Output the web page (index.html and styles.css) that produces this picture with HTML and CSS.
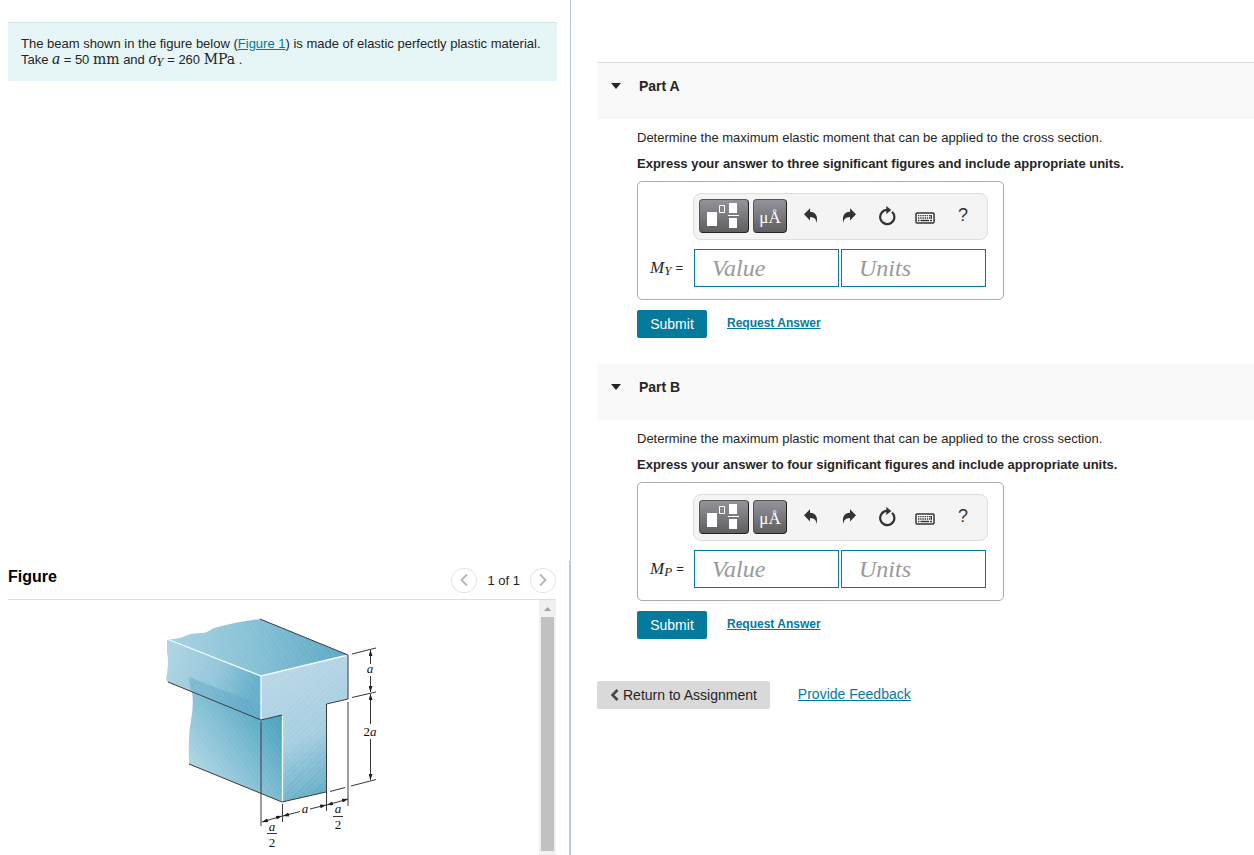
FILE: index.html
```
<!DOCTYPE html>
<html lang="en">
<head>
<meta charset="utf-8">
<title>Elastic and plastic moment</title>
<link rel="stylesheet" href="styles.css">
</head>
<body>
<svg class="sprite" aria-hidden="true">
  <symbol id="template" viewBox="0 0 50 34">
    <path fill="#fff" d="M8 13h10v14H8zM30 4h8v10h-8zM29 16h11v1H29zM30 19h8v10h-8z"/>
    <path fill="none" stroke="#fff" d="M20.500 6.500h5v7h-5z"/>
  </symbol>
  <symbol id="undo" viewBox="0 0 16 16">
    <path fill="#333" d="M1 6.200 7 .300v3.500c5.500.200 8.200 4 6.600 11.400-.200-4-2-6.200-6.600-6.300v3.600z"/>
  </symbol>
  <symbol id="redo" viewBox="0 0 16 16">
    <path fill="#333" d="M15 6.200 9 .3v3.500C3.500 4 .8 7.800 2.400 15.200c.2-4 2-6.200 6.600-6.300v3.600z"/>
  </symbol>
  <symbol id="reset" viewBox="0 0 18 20">
    <path fill="none" stroke="#333" stroke-width="2.200" d="M14 5.700A7.100 7.100 0 1 1 9.300 3.900"/>
    <path fill="#333" d="M8.300 0l5 3.900-5 4z"/>
  </symbol>
  <symbol id="keyboard" viewBox="0 0 20 12">
    <rect x="1" y="1" width="18" height="10" rx="1" fill="#fff" stroke="#333" stroke-width="1.500"/>
    <path fill="none" stroke="#333" stroke-width="1.300" stroke-dasharray="1.400 .8" d="M3 3.700h14M3 6h14"/>
    <path fill="none" stroke="#333" stroke-width="1.300" d="M3 8.500h1.500M5.500 8.500h8.500M15 8.500h2M16.300 3v3.500"/>
  </symbol>
</svg>

<div class="layout">
  <section class="left">
    <div class="intro">
      <p>The beam shown in the figure below (<a href="#figure">Figure 1</a>) is made of elastic perfectly plastic material. Take <i class="math">a</i> = 50 <span class="unit">mm</span> and <i class="math">σ<sub>Y</sub></i> = 260 <span class="unit">MPa</span> .</p>
    </div>
    <section class="figure" id="figure">
      <header class="figure-head">
        <h2>Figure</h2>
        <nav class="pager" aria-label="Figures">
          <button type="button" aria-label="Previous figure"><svg width="12" height="14" viewBox="0 0 12 14"><path d="M9 1.500 3.500 7 9 12.500"/></svg></button>
          <span>1 of 1</span>
          <button type="button" aria-label="Next figure"><svg width="12" height="14" viewBox="0 0 12 14"><path d="M3 1.500 8.500 7 3 12.500"/></svg></button>
        </nav>
      </header>
      <div class="viewer">
        <svg class="beam" viewBox="158 600 231 255" role="img" aria-label="T-section beam with dimensions">
          <defs>
            <linearGradient id="gTop" x1="0" y1="0" x2="1" y2="0"><stop offset="0" stop-color="#a8d2e2"/><stop offset=".5" stop-color="#83bfd4"/><stop offset="1" stop-color="#59a8c2"/></linearGradient>
            <linearGradient id="gSide" x1="0" y1="0" x2="1" y2=".3"><stop offset="0" stop-color="#b0d5e5"/><stop offset=".6" stop-color="#93c6da"/><stop offset="1" stop-color="#66afca"/></linearGradient>
            <linearGradient id="gWeb" x1="0" y1="1" x2="1" y2=".2"><stop offset="0" stop-color="#c5e0ea"/><stop offset=".6" stop-color="#79bad1"/><stop offset="1" stop-color="#459fbd"/></linearGradient>
            <linearGradient id="gFront" gradientUnits="userSpaceOnUse" x1="270" y1="685" x2="326" y2="795"><stop offset="0" stop-color="#b5d5e6"/><stop offset=".5" stop-color="#a4cde0"/><stop offset="1" stop-color="#5eabc5"/></linearGradient>
            <pattern id="hatchA" width="11" height="11" patternUnits="userSpaceOnUse" patternTransform="rotate(-34)"><path d="M2 0v11M5 0v11M9 0v11" stroke="#fff" stroke-width=".5" opacity=".22"/></pattern>
            <pattern id="hatchB" width="11" height="11" patternUnits="userSpaceOnUse" patternTransform="rotate(46)"><path d="M2 0v11M5 0v11M9 0v11" stroke="#fff" stroke-width=".6" opacity=".26"/></pattern>
            <marker id="tip" viewBox="0 0 6 4" refX="6" refY="2" markerWidth="6" markerHeight="4" markerUnits="userSpaceOnUse" orient="auto-start-reverse"><path d="M0 0 6 2 0 4z" fill="#231f20"/></marker>
            <path id="pTop" d="M167 639C173 640 176 638 180 638L185 636Q190 633 203 633C210 632 211 628 218 627Q237 622 260 619L348 655 261 676z"/>
            <path id="pSide" d="M167 639 261 676V720L168 682Q165 680 167 674 169 660 167 652z"/>
            <path id="pWeb" d="M192 692 261 720 282 715V802L189 764Q188 735 191 720 194 704 192 692z"/>
            <path id="pFront" d="M261 676 348 655V699L326 704V792L282 802V715L261 720z"/>
          </defs>
          <use href="#pWeb" fill="url(#gWeb)"/><use href="#pWeb" fill="url(#hatchA)"/>
          <use href="#pSide" fill="url(#gSide)"/>
          <path d="M189 677 261 705V720L191 691z" fill="#5aa8c6" opacity=".5"/>
          <use href="#pSide" fill="url(#hatchA)"/>
          <use href="#pTop" fill="url(#gTop)"/><use href="#pTop" fill="url(#hatchA)"/>
          <use href="#pFront" fill="url(#gFront)"/><use href="#pFront" fill="url(#hatchB)"/>
          <path class="edge-light" d="M167 639 261 676 348 655M261 676V720M282.500 716V802"/>
          <path class="edge" d="M260 619 348 655V699L326.500 704V811M168 682 261 720 282 715M189 764 282 802 326 792M261 722V826M282.500 804V822M348 702V806"/>
          <path class="dim" d="M352 654 376 648M352 697.500 376 692M351 786 376 779.500M330 791.500 345 787.500"/>
          <path class="dim" marker-end="url(#tip)" d="M370.500 664V650"/>
          <path class="dim" marker-end="url(#tip)" d="M370.500 676V692"/>
          <path class="dim" marker-end="url(#tip)" d="M370.500 724V694"/>
          <path class="dim" marker-end="url(#tip)" d="M370.500 739V780"/>
          <path class="dim" marker-start="url(#tip)" marker-end="url(#tip)" d="M262 822 282 816"/>
          <path class="dim" marker-end="url(#tip)" d="M300 811.500 283 816"/>
          <path class="dim" marker-end="url(#tip)" d="M310 809 326 805"/>
          <path class="dim" marker-start="url(#tip)" marker-end="url(#tip)" d="M327 805 348 799"/>
          <path class="dim" d="M267 833.500H277M333 816.500H343"/>
          <g class="dim-text">
            <text x="370" y="673"><tspan class="it">a</tspan></text>
            <text x="370" y="736">2<tspan class="it">a</tspan></text>
            <text x="305" y="813"><tspan class="it">a</tspan></text>
            <text x="272" y="831"><tspan class="it">a</tspan></text><text x="272" y="847">2</text>
            <text x="338" y="813"><tspan class="it">a</tspan></text><text x="338" y="829">2</text>
          </g>
        </svg>
        <div class="scrollbar" aria-hidden="true">
          <svg width="17" height="17" viewBox="0 0 17 17"><path fill="#a3a3a3" d="M5 11 8.500 7 12 11z"/></svg>
          <div class="thumb"></div>
        </div>
      </div>
    </section>
  </section>

  <main class="right">
    <section class="part first">
      <header class="part-head"><svg width="12" height="6" viewBox="0 0 12 6"><path fill="#252525" d="M1 0h10L6 6z"/></svg><h2>Part A</h2></header>
      <form class="part-body">
        <p>Determine the maximum elastic moment that can be applied to the cross section.</p>
        <p class="strong">Express your answer to three significant figures and include appropriate units.</p>
        <div class="answer">
          <div class="toolbar">
            <button type="button" class="dark wide" aria-label="Templates"><svg width="48" height="32" viewBox="1 1 48 32"><use href="#template" width="50" height="34"/></svg></button>
            <button type="button" class="dark" aria-label="Units">μÅ</button>
            <button type="button" class="tool" aria-label="Undo"><svg width="16" height="16"><use href="#undo"/></svg></button>
            <button type="button" class="tool" aria-label="Redo"><svg width="16" height="16"><use href="#redo"/></svg></button>
            <button type="button" class="tool" aria-label="Reset"><svg width="18" height="20"><use href="#reset"/></svg></button>
            <button type="button" class="tool low" aria-label="Keyboard"><svg width="20" height="12"><use href="#keyboard"/></svg></button>
            <button type="button" class="tool" aria-label="Help">?</button>
          </div>
          <div class="fields">
            <label for="value-a"><i class="math">M<sub>Y</sub></i><span>=</span></label>
            <input id="value-a" type="text" placeholder="Value">
            <input type="text" placeholder="Units" aria-label="Units for Part A">
          </div>
        </div>
        <div class="actions"><button type="button" class="submit">Submit</button><a href="#answer-a">Request Answer</a></div>
      </form>
    </section>
    <section class="part">
      <header class="part-head"><svg width="12" height="6" viewBox="0 0 12 6"><path fill="#252525" d="M1 0h10L6 6z"/></svg><h2>Part B</h2></header>
      <form class="part-body">
        <p>Determine the maximum plastic moment that can be applied to the cross section.</p>
        <p class="strong">Express your answer to four significant figures and include appropriate units.</p>
        <div class="answer">
          <div class="toolbar">
            <button type="button" class="dark wide" aria-label="Templates"><svg width="48" height="32" viewBox="1 1 48 32"><use href="#template" width="50" height="34"/></svg></button>
            <button type="button" class="dark" aria-label="Units">μÅ</button>
            <button type="button" class="tool" aria-label="Undo"><svg width="16" height="16"><use href="#undo"/></svg></button>
            <button type="button" class="tool" aria-label="Redo"><svg width="16" height="16"><use href="#redo"/></svg></button>
            <button type="button" class="tool" aria-label="Reset"><svg width="18" height="20"><use href="#reset"/></svg></button>
            <button type="button" class="tool low" aria-label="Keyboard"><svg width="20" height="12"><use href="#keyboard"/></svg></button>
            <button type="button" class="tool" aria-label="Help">?</button>
          </div>
          <div class="fields">
            <label for="value-b"><i class="math">M<sub>P</sub></i><span>=</span></label>
            <input id="value-b" type="text" placeholder="Value">
            <input type="text" placeholder="Units" aria-label="Units for Part B">
          </div>
        </div>
        <div class="actions"><button type="button" class="submit">Submit</button><a href="#answer-b">Request Answer</a></div>
      </form>
    </section>
    <footer class="foot">
      <button type="button" class="return"><svg width="9" height="12" viewBox="0 0 9 12"><path fill="none" stroke="#444" stroke-width="2.500" d="M7.500 1 2.500 6l5 5"/></svg>Return to Assignment</button>
      <a href="#feedback">Provide Feedback</a>
    </footer>
  </main>
</div>
</body>
</html>
```
FILE: styles.css
```
* { box-sizing: border-box; }
body {
  margin: 0;
  background: #fff;
  color: #252525;
  font: 13px/16px "Liberation Sans", Arial, sans-serif;
}
h2, p { margin: 0; }
a { color: #047a9c; }
button { font-family: inherit; padding: 0; border: 0; background: none; cursor: pointer; }
svg { display: block; }
.sprite { display: none; }
.math { font-family: "Liberation Serif", "Times New Roman", serif; font-size: 16px; line-height: 1px; }
.math sub { font-size: 13px; line-height: 1px; vertical-align: -2px; }
.unit { font-family: "DejaVu Serif", serif; font-size: 14px; line-height: 1px; }

.layout { display: grid; grid-template-columns: 5fr 6fr; min-height: 100vh; }

.left { display: flex; flex-direction: column; justify-content: space-between; }
.intro {
  margin: 22px 13px 0 8px;
  padding: 13px 13px;
  border-top: 1px solid #d3e1e1;
  background: #e6f6f6;
}

.figure { padding: 0 13px 0 8px; border-right: 1px solid #b9c9dc; }
.figure-head {
  display: flex;
  align-items: center;
  justify-content: space-between;
  height: 39px;
  border-bottom: 1px solid #ddd;
}
.figure-head h2 { padding-bottom: 6px; color: #000; font-size: 16px; line-height: 18px; }
.pager { display: flex; align-items: center; gap: 10px; }
.pager button {
  display: grid;
  place-items: center;
  width: 26px;
  height: 25px;
  border: 1px solid #e3e3e3;
  border-radius: 50%;
}
.pager span { padding-top: 2px; }
.pager path { fill: none; stroke: #b8b8b8; stroke-width: 2; }
.viewer { display: flex; justify-content: space-between; height: 255px; }
.beam { width: 231px; height: 255px; margin: 0 auto; }
.scrollbar { display: flex; flex-direction: column; width: 17px; padding-bottom: 4px; background: #f1f1f1; }
.thumb { flex: 1; margin: 0 2px; background: #c1c1c1; }
.edge { fill: none; stroke: #3a3a3c; stroke-width: 1; }
.edge-light { fill: none; stroke: #f4fafc; stroke-width: 1.3; }
.dim { fill: none; stroke: #231f20; stroke-width: .9; }
.dim-text { font: 13px "Liberation Serif", "Times New Roman", serif; text-anchor: middle; fill: #111; }
.it { font-style: italic; }

.right { padding: 62px 0 0 26px; border-left: 1px solid #b9c9dc; }
.part-head {
  display: flex;
  align-items: center;
  gap: 17px;
  height: 56px;
  padding: 0 13px 10px;
  background: #f9f9f9;
}
.first .part-head { height: 57px; border-top: 1px solid #ddd; }
.part-head h2 { font-size: 14px; }
.part-body { padding: 11px 0 26px 40px; }
.part-body .strong { padding: 10px 0 9px; font-weight: bold; }
.answer {
  width: 367px;
  max-width: 100%;
  padding: 11px 15px 12px 12px;
  border: 1px solid #aaa;
  border-radius: 5px;
}
.toolbar {
  display: flex;
  align-items: center;
  gap: 4px;
  height: 47px;
  margin-left: 43px;
  padding: 0 4px 2px 5px;
  border: 1px solid #ddd;
  border-radius: 8px;
  background: #f4f4f4;
}
.dark {
  width: 34px;
  height: 34px;
  border: 1px solid #222;
  border-top-color: #555;
  border-left-color: #555;
  border-radius: 4px;
  background: linear-gradient(#93939b, #5f5f61);
  color: #fff;
  font: 16px/18px "DejaVu Serif", serif;
  font: 17px/18px "Liberation Serif", "Times New Roman", serif;
  padding-top: 4px;
}
.wide { width: 50px; padding-top: 0; }
.tool { display: grid; place-items: center; width: 34px; height: 34px; color: #333; font-size: 18px; }
.dark + .tool { margin-left: 3px; }
.low { padding-top: 4px; }
.fields { display: flex; align-items: center; gap: 2px; margin: 9px 2px 0 0; }
.fields label { display: flex; gap: 4px; width: 42px; }
.fields input {
  flex: 1;
  min-width: 0;
  height: 38px;
  padding: 0 17px;
  border: 1px solid #047a9c;
  border-radius: 0;
  color: #252525;
  font: italic 24px "Liberation Serif", "Times New Roman", serif;
}
.fields .math { font-size: 17px; line-height: 16px; }
.fields input::placeholder { color: #999; opacity: 1; }
.actions { display: flex; gap: 20px; padding-top: 10px; }
.actions a { padding-top: 5px; font-size: 12px; font-weight: bold; }
.submit { width: 70px; height: 28px; border-radius: 2px; background: #047a9c; color: #fff; font-size: 14px; }
.foot { display: flex; gap: 28px; padding-top: 16px; font-size: 14px; }
.foot a { padding-top: 5px; }
.return {
  display: flex;
  align-items: center;
  gap: 4px;
  height: 28px;
  padding: 0 13px;
  border-radius: 2px;
  background: #d9d9d9;
  color: #252525;
  font-size: 14px;
}
```
